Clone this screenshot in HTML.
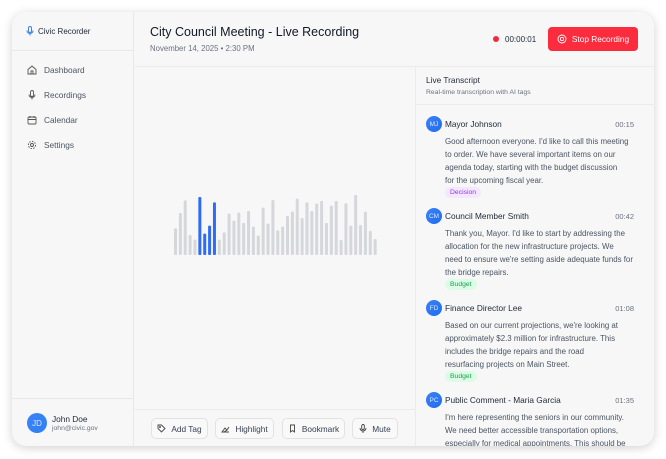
<!DOCTYPE html>
<html><head><meta charset="utf-8"><style>
*{box-sizing:border-box;margin:0;padding:0}
body{width:666px;height:459px;background:#fff;font-family:"Liberation Sans",sans-serif;position:relative;overflow:hidden;color:#1f2937}
.win{position:absolute;left:12px;top:12px;width:642px;height:434px;background:#f7f7f7;border-radius:14px;box-shadow:0 2px 10px rgba(0,0,0,.18);overflow:hidden}
.a{position:absolute}
.sb{left:0;top:0;width:122px;height:434px;border-right:1px solid #e8e8e8}
.nav{position:absolute;left:15px;font-size:8.3px;color:#4b5563;display:flex;align-items:center;gap:7px}
.nav svg{width:10px;height:10px}
.btn{position:absolute;top:406px;height:21px;border:1px solid #e2e2e2;border-radius:5px;background:#f9f9f9;font-size:8.3px;color:#374151;display:flex;align-items:center;justify-content:center;gap:5px}
.ent{position:absolute;left:10px;width:208px}
.av{position:absolute;left:0;top:0;width:16px;height:16px;border-radius:50%;background:linear-gradient(135deg,#3b82f6,#1e6cf0);color:#dbe8ff;font-size:6.5px;display:flex;align-items:center;justify-content:center}
.nm{position:absolute;left:19px;top:3px;font-size:8.3px;color:#1f2937;white-space:nowrap}
.tm{position:absolute;right:0;top:4px;font-size:7.5px;color:#6b7280}
.tx{position:absolute;left:19px;top:19px;font-size:7.9px;line-height:13px;color:#4b5563;white-space:nowrap}
.tag{position:absolute;left:19px;top:71px;font-size:6.8px;padding:2px 5px;border-radius:7px}
</style></head><body>
<div class="win">
 <div class="a sb">
  <div class="a" style="left:14px;top:14px;font-size:8px;color:#1f2937;display:flex;align-items:center;gap:4px">
   <svg width="8" height="10" viewBox="0 0 8 10" fill="none" stroke="#3b82f6" stroke-width="1"><rect x="2.5" y=".5" width="3" height="6" rx="1.5"/><path d="M1 4.5a3 3 0 0 0 6 0M4 7.5v2"/></svg>Civic Recorder</div>
  <div class="a" style="left:0;top:38px;width:122px;border-top:1px solid #e8e8e8"></div>
  <div class="nav" style="top:53px"><svg viewBox="0 0 10 10" fill="none" stroke="#555" stroke-width=".9"><path d="M1 4.5L5 1l4 3.5V9H1z M4 9V6h2v3"/></svg>Dashboard</div>
  <div class="nav" style="top:78px"><svg viewBox="0 0 10 10" fill="none" stroke="#555" stroke-width=".9"><rect x="3.5" y=".5" width="3" height="6" rx="1.5"/><path d="M2 4.5a3 3 0 0 0 6 0M5 7.5v2"/></svg>Recordings</div>
  <div class="nav" style="top:103px"><svg viewBox="0 0 10 10" fill="none" stroke="#555" stroke-width=".9"><rect x="1" y="2" width="8" height="7" rx="1"/><path d="M1 4.5h8M3 1v2M7 1v2"/></svg>Calendar</div>
  <div class="nav" style="top:128px"><svg viewBox="0 0 10 10" fill="none" stroke="#555" stroke-width=".9"><circle cx="5" cy="5" r="1.5"/><circle cx="5" cy="5" r="3.6" stroke-dasharray="1.6 1.2"/></svg>Settings</div>
  <div class="a" style="left:0;top:386px;width:122px;border-top:1px solid #e8e8e8"></div>
  <div class="a" style="left:15px;top:401px;width:20px;height:20px;border-radius:50%;background:linear-gradient(135deg,#3b82f6,#2f80f5);color:#dbe8ff;font-size:8px;display:flex;align-items:center;justify-content:center">JD</div>
  <div class="a" style="left:40px;top:402px;font-size:8.3px;color:#1f2937">John Doe</div>
  <div class="a" style="left:40px;top:413px;font-size:6.8px;color:#6b7280">john@civic.gov</div>
 </div>
 <div class="a" style="left:138px;top:13px;font-size:12.5px;color:#111827">City Council Meeting - Live Recording</div>
 <div class="a" style="left:138px;top:32px;font-size:7.8px;color:#6b7280">November 14, 2025 • 2:30 PM</div>
 <div class="a" style="left:481px;top:24px;width:6px;height:6px;border-radius:50%;background:#ef2b3c"></div>
 <div class="a" style="left:493px;top:23px;font-size:8px;color:#1f2937">00:00:01</div>
 <div class="a" style="left:536px;top:15px;width:90px;height:24px;border-radius:4px;background:#fb2c3e;color:#fff;font-size:8.3px;display:flex;align-items:center;justify-content:center;gap:5px"><svg width="10" height="10" viewBox="0 0 10 10" fill="none" stroke="#fff" stroke-width=".9"><circle cx="5" cy="5" r="4"/><rect x="3.6" y="3.6" width="2.8" height="2.8" rx=".5"/></svg>Stop Recording</div>
 <div class="a" style="left:123px;top:54px;width:519px;border-top:1px solid #ebebeb"></div>
 <div class="a" style="left:403px;top:54px;width:1px;height:380px;background:#ebebeb"></div>
 <svg class="a" style="left:0;top:0" width="400" height="260">
  <g id="bars"></g>
 </svg>
 <div class="a" style="left:123px;top:397px;width:280px;border-top:1px solid #ebebeb"></div>
 <div class="btn" style="left:139px;width:57px"><svg width="9" height="9" viewBox="0 0 9 9" fill="none" stroke="#444" stroke-width=".9"><path d="M1 1h3.5L8 4.5 4.5 8 1 4.5z"/><circle cx="3" cy="3" r=".5"/></svg>Add Tag</div>
 <div class="btn" style="left:203px;width:59px"><svg width="9" height="9" viewBox="0 0 9 9" fill="none" stroke="#444" stroke-width=".9"><path d="M1 8l3-4 2 2-3 2zM6 6l2-3M1 8h7"/></svg>Highlight</div>
 <div class="btn" style="left:270px;width:63px"><svg width="9" height="9" viewBox="0 0 9 9" fill="none" stroke="#444" stroke-width=".9"><path d="M2.5 1h4v7L4.5 6.5 2.5 8z"/></svg>Bookmark</div>
 <div class="btn" style="left:340px;width:46px"><svg width="8" height="9" viewBox="0 0 8 9" fill="none" stroke="#444" stroke-width=".9"><rect x="2.7" y=".5" width="2.6" height="5" rx="1.3"/><path d="M1 4a3 3 0 0 0 6 0M4 7v2"/></svg>Mute</div>

 <div class="a" style="left:414px;top:63px;font-size:8.3px;color:#1f2937">Live Transcript</div>
 <div class="a" style="left:414px;top:77px;font-size:6.8px;color:#6b7280">Real-time transcription with AI tags</div>
 <div class="a" style="left:403px;top:92px;width:239px;border-top:1px solid #ebebeb"></div>

 <div class="ent" style="left:414px;top:104px">
  <div class="av">MJ</div><div class="nm">Mayor Johnson</div><div class="tm">00:15</div>
  <div class="tx">Good afternoon everyone. I'd like to call this meeting<br>to order. We have several important items on our<br>agenda today, starting with the budget discussion<br>for the upcoming fiscal year.</div>
  <div class="tag" style="background:#f3e8ff;color:#9333ea">Decision</div>
 </div>
 <div class="ent" style="left:414px;top:196px">
  <div class="av">CM</div><div class="nm">Council Member Smith</div><div class="tm">00:42</div>
  <div class="tx">Thank you, Mayor. I'd like to start by addressing the<br>allocation for the new infrastructure projects. We<br>need to ensure we're setting aside adequate funds for<br>the bridge repairs.</div>
  <div class="tag" style="background:#dcfce7;color:#16a34a">Budget</div>
 </div>
 <div class="ent" style="left:414px;top:288px">
  <div class="av">FD</div><div class="nm">Finance Director Lee</div><div class="tm">01:08</div>
  <div class="tx">Based on our current projections, we're looking at<br>approximately $2.3 million for infrastructure. This<br>includes the bridge repairs and the road<br>resurfacing projects on Main Street.</div>
  <div class="tag" style="background:#dcfce7;color:#16a34a">Budget</div>
 </div>
 <div class="ent" style="left:414px;top:380px">
  <div class="av">PC</div><div class="nm">Public Comment - Maria Garcia</div><div class="tm">01:35</div>
  <div class="tx">I'm here representing the seniors in our community.<br>We need better accessible transportation options,<br>especially for medical appointments. This should be</div>
 </div>
</div>
<script>
var tops=[116,70,32,136,150,22,132,108,38,150,128,72,93,69,100,64,111,138,54,102,31,122,111,79,66,27,85,38,64,42,34,100,48,34,151,41,108,16,106,66,124,148];
var g=document.getElementById('bars'),s='';
for(var i=0;i<tops.length;i++){var h=(196-tops[i])/3,x=174+i*4.87-12,y=255-12-h;
s+='<rect x="'+x.toFixed(2)+'" y="'+y.toFixed(2)+'" width="3" height="'+h.toFixed(2)+'" rx="1" fill="'+((i>=5&&i<=8)?'#2f6bf6':'#d5d7db')+'"/>';}
g.innerHTML=s;
</script>
</body></html>
